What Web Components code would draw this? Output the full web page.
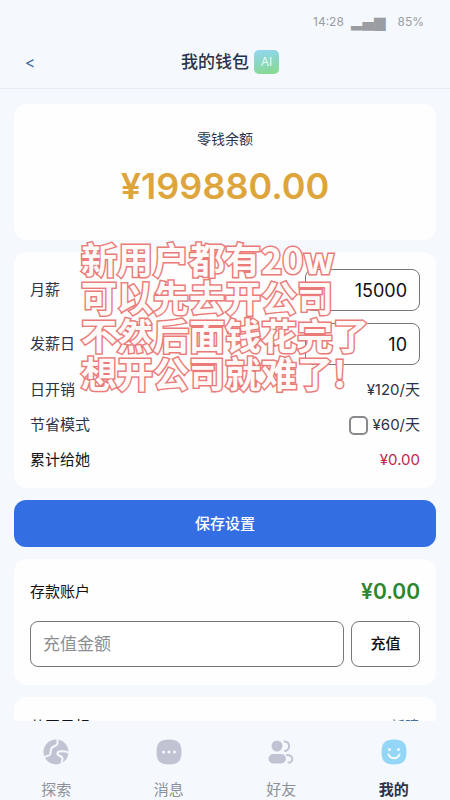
<!DOCTYPE html>
<html lang="zh-CN">
<head>
<meta charset="utf-8">
<meta name="viewport" content="width=device-width, initial-scale=1">
<title>我的钱包</title>
<style>
  body {
    margin: 0;
    background: #f5f9fe;
    color: #2c3349;
    font: 15px/20px Inter, "Noto Sans CJK SC", sans-serif;
  }
</style>
</head>
<body>
<wallet-app></wallet-app>

<script>
class BaseElement extends HTMLElement {
  connectedCallback() {
    if (this.shadowRoot) return;
    const root = this.attachShadow({ mode: "open" });
    root.innerHTML = `<style>*{box-sizing:border-box}:host{box-sizing:border-box}</style>` + this.render();
  }
}

class StatusBar extends BaseElement {
  render() {
    return `<style>
      :host { display: flex; justify-content: flex-end; align-items: center; padding: 12px 26px 4px; font-size: 12px; color: #9a9da1; }
      .signal { font: 15px/20px "DejaVu Sans", sans-serif; margin: 0 12px 0 7px; }
    </style>
    <span>14:28</span><span class="signal">▂▄▆</span><span>85%</span>`;
  }
}

class PageHeader extends BaseElement {
  render() {
    return `<style>
      :host { display: grid; grid-template-columns: 60px 1fr 50px; align-items: center; height: 53px; border-bottom: 1px solid #e4eaf0; }
      button { border: 0; padding: 0; background: none; height: 40px; font: 16px/20px Inter, sans-serif; color: #44709f; }
      .title { display: flex; justify-content: center; align-items: center; gap: 5px; }
      h1 { margin: 0; font-size: 17px; line-height: 24px; font-weight: 500; }
      .badge { width: 25px; height: 24px; border-radius: 5px; background: linear-gradient(170deg, #91d5f5, #86d98a); color: #e6faf4; font-size: 12px; line-height: 24px; text-align: center; }
    </style>
    <button aria-label="返回">&lt;</button>
    <div class="title"><h1><slot></slot></h1><span class="badge">AI</span></div>`;
  }
}

class WalletCard extends BaseElement {
  render() {
    return `<style>
      :host { display: flex; flex-direction: column; flex: none; background: #fefefe; border-radius: 13px; padding: 16px; }
    </style><slot></slot>`;
  }
}

class BalancePanel extends BaseElement {
  render() {
    return `<style>
      :host { display: flex; flex-direction: column; align-items: center; gap: 13px; padding: 9px 0 14px; }
      .label { font-size: 14px; line-height: 20px; }
      .amount { font-size: 36px; line-height: 48px; font-weight: 600; color: #dda53b; }
    </style>
    <span class="label">零钱余额</span><span class="amount">¥199880.00</span>`;
  }
}

class InfoRow extends BaseElement {
  render() {
    return `<style>
      :host { display: flex; justify-content: space-between; align-items: center; min-height: 20px; }
      :host([strong]) { color: #111; }
      .value { display: flex; align-items: center; gap: 5px; }
    </style><span><slot name="label"></slot></span><span class="value"><slot></slot></span>`;
  }
}

class FieldRow extends BaseElement {
  render() {
    return `<style>
      :host { display: flex; justify-content: space-between; align-items: center; }
      input { width: 115px; height: 42px; border: 1px solid #75777a; border-radius: 8px; background: #fff; padding: 0 12px; text-align: right; font: 18px/24px Inter, sans-serif; color: #111; }
    </style><label for="field">${this.getAttribute("label")}</label>
    <input id="field" inputmode="numeric" value="${this.getAttribute("value")}">`;
  }
}

class SettingsPanel extends BaseElement {
  render() {
    return `<style>
      :host { display: flex; flex-direction: column; gap: 15px; padding: 1px 0 2px; }
      .fields { display: flex; flex-direction: column; gap: 12px; }
      .red { color: #c2264e; }
      input { appearance: none; width: 19px; height: 19px; margin: 0; border: 2px solid #87898c; border-radius: 5px; background: #fff; }
      label { display: contents; }
    </style>
    <div class="fields">
      <field-row label="月薪" value="15000"></field-row>
      <field-row label="发薪日" value="10"></field-row>
    </div>
    <info-row><span slot="label">日开销</span>¥120/天</info-row>
    <info-row><label slot="label" for="saving">节省模式</label><input id="saving" type="checkbox"><span>¥60/天</span></info-row>
    <info-row strong><span slot="label">累计给她</span><span class="red">¥0.00</span></info-row>`;
  }
}

class SaveButton extends BaseElement {
  render() {
    return `<style>
      :host { display: block; flex: none; }
      button { display: block; width: 100%; height: 47px; border: 0; border-radius: 12px; background: #336fe3; color: #fff; font: inherit; font-weight: 500; }
    </style><button><slot></slot></button>`;
  }
}

class DepositPanel extends BaseElement {
  render() {
    return `<style>
      :host { display: flex; flex-direction: column; gap: 15px; padding: 3px 0 2px; }
      .amount { font-size: 21px; line-height: 28px; font-weight: 600; color: #2c852f; }
      form { display: flex; gap: 7px; margin: 0; }
      input, button { height: 46px; border: 1px solid #75777a; border-radius: 8px; background: #fff; }
      input { flex: 1; min-width: 0; padding: 0 12px; font: inherit; font-size: 17px; line-height: 24px; }
      input::placeholder { color: #8c8f92; opacity: 1; }
      button { width: 69px; padding: 0; font: inherit; font-weight: 500; color: #111; }
    </style>
    <info-row strong><span slot="label">存款账户</span><span class="amount">¥0.00</span></info-row>
    <form><input aria-label="充值金额" placeholder="充值金额"><button type="button">充值</button></form>`;
  }
}

class NoteOverlay extends BaseElement {
  render() {
    return `<style>
      :host { position: absolute; left: 81px; top: 239px; z-index: 2; pointer-events: none; white-space: nowrap;
        font: 700 36px/38px "Noto Sans CJK SC", sans-serif; color: #fffaf8; -webkit-text-stroke: 3px #ea7b79; paint-order: stroke fill; }
      p { margin: 0; }
    </style><p>新用户都有20w</p><p>可以先去开公司</p><p>不然后面钱花完了</p><p>想开公司就难了!</p>`;
  }
}

const TAB_ICONS = {
  explore: `<circle cx="13" cy="13" r="12.5" fill="#c1c3d2"/><g fill="none" stroke="#f5f9fe" stroke-width="2" stroke-linecap="round" stroke-linejoin="round"><path d="M14.500 0V4C14.500 8 8.500 6.500 8 10.500C7.500 14.500 8 16.500 4 17C2.500 17.200 1.500 18 0.500 19.500"/><path d="M26 13.500C21 12 14.500 11.500 14.500 14.500C14.500 18 20 16 19.500 20C19.300 22 18.500 23.500 18.500 26"/></g>`,
  message: `<path d="M13 .5C22 .5 25.500 4 25.500 13S22 25.500 13 25.500.5 22 .5 13 4 .5 13 .5Z" fill="#c1c3d2"/><g fill="#f5f9fe"><circle cx="7.500" cy="13" r="1.500"/><circle cx="13" cy="13" r="1.500"/><circle cx="18.500" cy="13" r="1.500"/></g>`,
  friends: `<g fill="#c1c3d2"><circle cx="9" cy="7" r="5.500"/><rect x="0.500" y="15" width="17.500" height="9.500" rx="4.700"/></g><g fill="none" stroke="#c1c3d2" stroke-width="2" stroke-linecap="round"><path d="M16.500 2.500C22.500 3 22.500 11 17 12"/><path d="M19 16C25.500 16 26 23.500 20.500 23.500"/></g>`,
  mine: `<path d="M13 .5C22 .5 25.500 4 25.500 13S22 25.500 13 25.500.5 22 .5 13 4 .5 13 .5Z" fill="#93d6f5"/><g fill="#f5f9fe"><circle cx="8.500" cy="10.500" r="1.500"/><circle cx="17.500" cy="10.500" r="1.500"/></g><path d="M7.500 15.500C10 20.500 16 20.500 18.500 15.500" fill="none" stroke="#f5f9fe" stroke-width="2" stroke-linecap="round"/>`
};

class TabItem extends BaseElement {
  render() {
    return `<style>
      :host { display: block; flex: 1; }
      a { display: flex; flex-direction: column; align-items: center; gap: 15px; color: #8e9197; text-decoration: none; }
      :host([active]) a { color: #2c3349; font-weight: 700; }
      svg { display: block; width: 26px; height: 26px; }
    </style><a href="#${this.getAttribute("icon")}"><svg viewBox="0 0 26 26" aria-hidden="true">${TAB_ICONS[this.getAttribute("icon")]}</svg><span><slot></slot></span></a>`;
  }
}

class TabBar extends BaseElement {
  render() {
    return `<style>
      :host { display: block; flex: none; background: #f5f9fe; padding-top: 18px; }
      nav { display: flex; }
    </style><nav>
      <tab-item icon="explore">探索</tab-item>
      <tab-item icon="message">消息</tab-item>
      <tab-item icon="friends">好友</tab-item>
      <tab-item icon="mine" active>我的</tab-item>
    </nav>`;
  }
}

class WalletApp extends BaseElement {
  render() {
    return `<style>
      :host { display: flex; flex-direction: column; height: 100vh; position: relative; overflow: hidden; }
      main { flex: 1; min-height: 0; overflow: hidden; display: flex; flex-direction: column; gap: 12px; padding: 15px 14px 0; }
      a { color: #44709f; text-decoration: none; }
      .goals { padding: 4px 0; }
    </style>
    <status-bar></status-bar>
    <page-header>我的钱包</page-header>
    <main>
      <wallet-card><balance-panel></balance-panel></wallet-card>
      <wallet-card><settings-panel></settings-panel></wallet-card>
      <save-button>保存设置</save-button>
      <wallet-card><deposit-panel></deposit-panel></wallet-card>
      <wallet-card><info-row class="goals" strong><span slot="label">共同目标</span><a href="#new">新建</a></info-row></wallet-card>
    </main>
    <tab-bar></tab-bar>
    <note-overlay></note-overlay>`;
  }
}

Object.entries({
  "status-bar": StatusBar, "page-header": PageHeader, "wallet-card": WalletCard,
  "balance-panel": BalancePanel, "info-row": InfoRow, "field-row": FieldRow,
  "settings-panel": SettingsPanel, "save-button": SaveButton, "deposit-panel": DepositPanel,
  "note-overlay": NoteOverlay, "tab-item": TabItem, "tab-bar": TabBar, "wallet-app": WalletApp
}).forEach(([name, cls]) => customElements.define(name, cls));
</script>
</body>
</html>
